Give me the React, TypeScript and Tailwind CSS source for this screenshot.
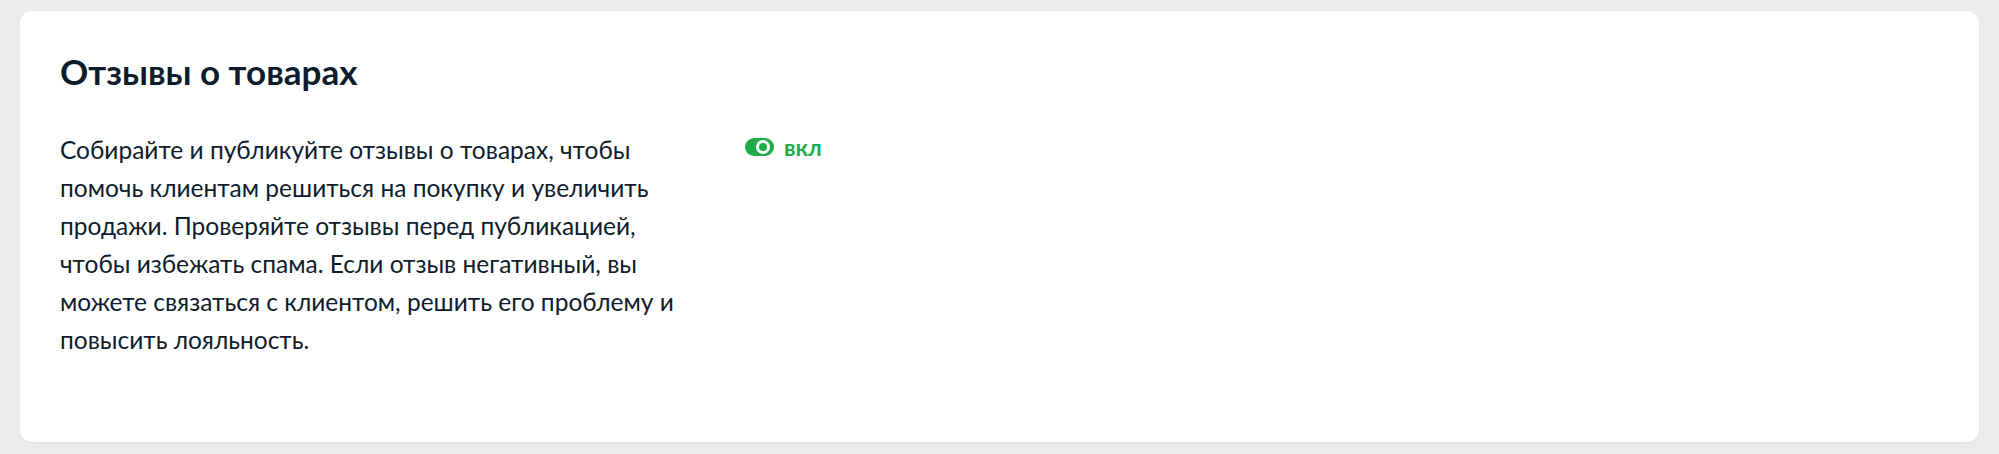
import React from "react";

export default function App() {
  return (
    <div className="min-h-[454px] w-full bg-[#ebecee] px-[20px] pt-[11px] pb-[12px]" style={{ fontFamily: "Lato, 'Noto Sans', sans-serif" }}>
      <div className="rounded-[12px] bg-white px-[40px] pt-[40px] pb-[50px] h-[431px] shadow-[0_1px_2px_rgba(0,0,0,0.06)]">
        <h2 className="text-[35px] font-bold leading-[40px] text-[#0e1c2c]">Отзывы о товарах</h2>
        <div className="mt-[40px] flex items-start">
          <p className="w-[640px] text-[24.5px] leading-[38px] text-[#0e1c2c]">
            Собирайте и публикуйте отзывы о товарах, чтобы помочь клиентам решиться на покупку и увеличить продажи. Проверяйте отзывы перед публикацией, чтобы избежать спама. Если отзыв негативный, вы можете связаться с клиентом, решить его проблему и повысить лояльность.
          </p>
          <div className="ml-[45px] flex items-center gap-[10px] pt-[4px]">
            <span className="flex h-[18px] w-[29px] items-center justify-end rounded-full bg-[#1eac4b] pr-[4px]">
              <span className="h-[14px] w-[14px] rounded-full border-[3.5px] border-white bg-[#1eac4b]" />
            </span>
            <span className="text-[23px] font-bold leading-[24px] text-[#1eac4b]">вкл</span>
          </div>
        </div>
      </div>
    </div>
  );
}
